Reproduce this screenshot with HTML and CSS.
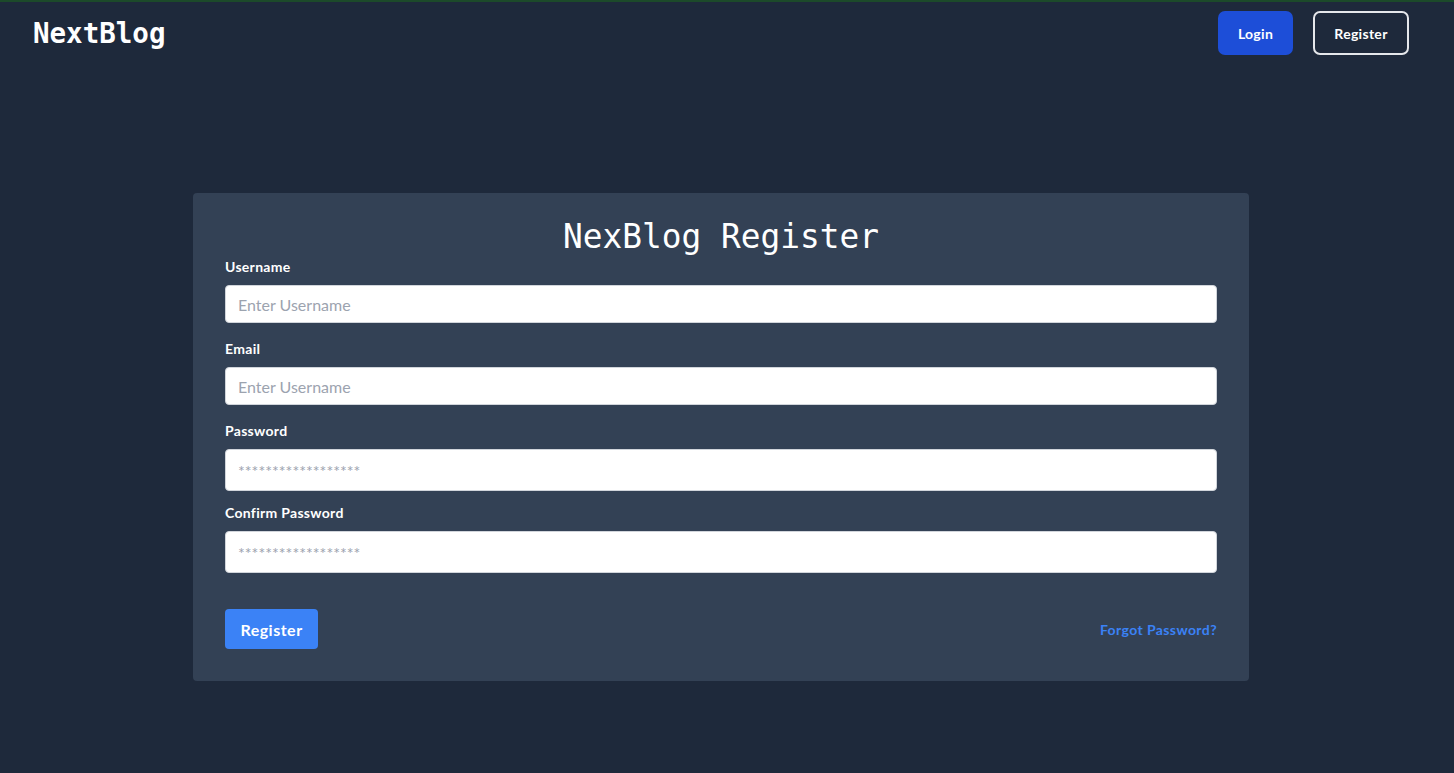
FILE: index.html
```html
<!DOCTYPE html>
<html lang="en">
<head>
<meta charset="utf-8">
<title>NextBlog - Register</title>
<link rel="stylesheet" href="styles.css">
</head>
<body>
<div class="topline"></div>
<header class="nav">
  <a class="logo" href="#">NextBlog</a>
  <div class="nav-actions">
    <a class="btn-login" href="#">Login</a>
    <a class="btn-outline" href="#">Register</a>
  </div>
</header>
<main class="main">
  <form class="card">
    <h1 class="card-title">NexBlog Register</h1>
    <div class="field">
      <label class="label">Username</label>
      <input class="input" type="text" placeholder="Enter Username">
    </div>
    <div class="field">
      <label class="label">Email</label>
      <input class="input" type="text" placeholder="Enter Username">
    </div>
    <div class="field field-pass">
      <label class="label">Password</label>
      <input class="input input-pass" type="password" placeholder="******************">
    </div>
    <div class="field field-pass">
      <label class="label">Confirm Password</label>
      <input class="input input-pass" type="password" placeholder="******************">
    </div>
    <div class="actions">
      <button class="btn-submit" type="button">Register</button>
      <a class="forgot" href="#">Forgot Password?</a>
    </div>
  </form>
</main>
</body>
</html>
```

FILE: styles.css
```css
* { box-sizing: border-box; }
html, body { margin: 0; padding: 0; }
body {
  background: #1e293b;
  min-height: 773px;
  font-family: Lato, "Noto Sans", sans-serif;
  color: #fff;
}
.topline { height: 2px; background: #1c4a2a; }
.nav {
  display: flex;
  justify-content: space-between;
  align-items: center;
  padding: 9px 45px 0 33px;
}
.logo {
  font-family: "DejaVu Sans Mono", monospace;
  font-weight: bold;
  font-size: 27.5px;
  color: #fff;
  text-decoration: none;
}
.nav-actions { display: flex; gap: 20px; }
.btn-login, .btn-outline {
  display: flex;
  align-items: center;
  justify-content: center;
  height: 44px;
  font-size: 14px;
  font-weight: bold;
  letter-spacing: 0.3px;
  color: #fff;
  text-decoration: none;
  border-radius: 7px;
}
.btn-login { width: 75px; background: #1d4ed8; }
.btn-outline { width: 96px; border: 2px solid #e5e7eb; }
.main {
  display: flex;
  justify-content: flex-start;
  padding: 138px 0 0 193px;
}
.card {
  width: 1056px;
  background: #334155;
  border-radius: 4px;
  padding: 24px 32px 32px;
}
.card-title {
  margin: 0;
  text-align: center;
  font-family: "DejaVu Sans Mono", monospace;
  font-weight: normal;
  font-size: 32.8px;
  line-height: 40px;
  color: #fff;
}
.field { display: flex; flex-direction: column; margin-bottom: 16px; }
.field-pass { margin-bottom: 12px; }
.label {
  font-size: 14px;
  font-weight: bold;
  letter-spacing: 0.3px;
  line-height: 20px;
  margin-bottom: 8px;
}
.input {
  width: 100%;
  height: 38px;
  border: 1px solid #d1d5db;
  border-radius: 4px;
  background: #fff;
  padding: 0 12px;
  font-family: Lato, "Noto Sans", sans-serif;
  font-size: 16px;
  color: #374151;
  outline: none;
}
.input::placeholder { color: #9ca3af; }
.input-pass { height: 42px; font-size: 16px; }
.actions {
  display: flex;
  justify-content: space-between;
  align-items: center;
  margin-top: 36px;
}
.btn-submit {
  width: 93px;
  height: 40px;
  background: #3b82f6;
  color: #fff;
  border: none;
  border-radius: 4px;
  font-family: Lato, "Noto Sans", sans-serif;
  font-size: 16px;
  font-weight: bold;
  letter-spacing: 0.5px;
  padding: 0;
}
.forgot {
  color: #3b82f6;
  font-size: 14px;
  font-weight: bold;
  letter-spacing: 0.4px;
  text-decoration: none;
}
```
